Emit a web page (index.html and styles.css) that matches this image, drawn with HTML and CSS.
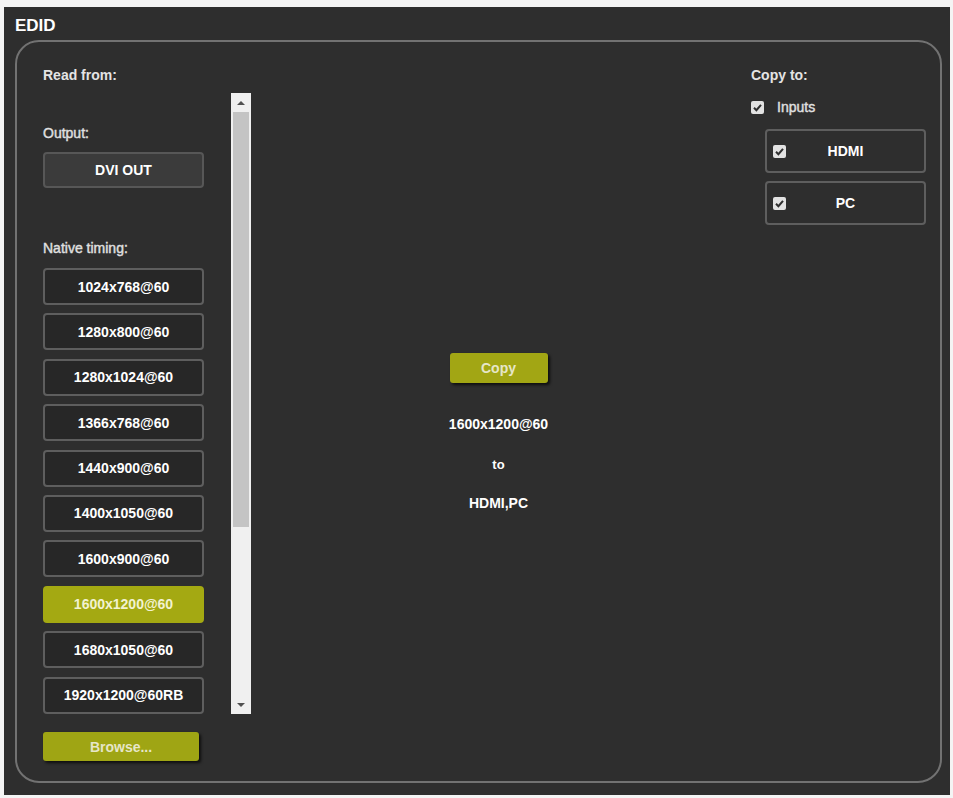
FILE: index.html
```html
<!doctype html>
<html lang="en">
<head>
	<meta charset="UTF-8">
	<title>EDID</title>
	<link rel="stylesheet" href="styles.css">
</head>
<body>
	<div class="panel">
		<div class="panel-title">EDID</div>
		<div class="box">
			<!-- read from -->
			<div class="col-left">
				<div class="head">Read from:</div>
				<div class="scroller">
					<div class="scroll-content">
						<div class="label">Output:</div>
						<div class="btn btn-output">DVI OUT</div>
						<div class="label label-native">Native timing:</div>
						<div class="timings">
							<div class="btn">1024x768@60</div>
							<div class="btn">1280x800@60</div>
							<div class="btn">1280x1024@60</div>
							<div class="btn">1366x768@60</div>
							<div class="btn">1440x900@60</div>
							<div class="btn">1400x1050@60</div>
							<div class="btn">1600x900@60</div>
							<div class="btn btn-selected">1600x1200@60</div>
							<div class="btn">1680x1050@60</div>
							<div class="btn">1920x1200@60RB</div>
						</div>
					</div>
					<div class="scrollbar">
						<div class="sb-arrow"><span class="tri-up"></span></div>
						<div class="sb-track">
							<div class="sb-thumb"></div>
						</div>
						<div class="sb-arrow"><span class="tri-down"></span></div>
					</div>
				</div>
				<div class="btn-olive btn-browse">Browse...</div>
			</div>

			<!-- copy -->
			<div class="col-center">
				<div class="btn-olive btn-copy">Copy</div>
				<div class="info info-res">1600x1200@60</div>
				<div class="info info-to">to</div>
				<div class="info info-dest">HDMI,PC</div>
			</div>

			<!-- copy to -->
			<div class="col-right">
				<div class="head">Copy to:</div>
				<div class="check-row">
					<span class="check"><svg viewBox="0 0 13 13" width="13" height="13"><path d="M3 6.8 L5.4 9.2 L10 3.8" fill="none" stroke="#2e2e2e" stroke-width="2"/></svg></span>
					<span class="check-label">Inputs</span>
				</div>
				<div class="inputs">
					<div class="input-box">
						<span class="check"><svg viewBox="0 0 13 13" width="13" height="13"><path d="M3 6.8 L5.4 9.2 L10 3.8" fill="none" stroke="#2e2e2e" stroke-width="2"/></svg></span>
						<span class="input-name">HDMI</span>
					</div>
					<div class="input-box">
						<span class="check"><svg viewBox="0 0 13 13" width="13" height="13"><path d="M3 6.8 L5.4 9.2 L10 3.8" fill="none" stroke="#2e2e2e" stroke-width="2"/></svg></span>
						<span class="input-name">PC</span>
					</div>
				</div>
			</div>
		</div>
	</div>
</body>
</html>
```

FILE: styles.css
```css
*{
	margin: 0;
	padding: 0;
	box-sizing: border-box;
}
body{
	background: #f4f4f4;
	font-family: "Liberation Sans", Arial, sans-serif;
	font-weight: bold;
	color: #e8e8e8;
}
.panel{
	margin: 7px 3px 3px 4px;
	height: 788px;
	background: #2e2e2e;
	padding: 9px 8px 12px 11px;
	display: flex;
	flex-direction: column;
}
.panel-title{
	font-size: 17px;
	line-height: 20px;
	color: #fff;
	margin-bottom: 4px;
}
.box{
	flex: 1;
	border: 2px solid #727272;
	border-radius: 24px;
	padding: 24px 14px 20px 26px;
	display: flex;
}
.head{
	font-size: 14px;
	line-height: 18px;
	color: #e4e4e4;
}

/* left column */
.col-left{
	width: 208px;
	display: flex;
	flex-direction: column;
}
.scroller{
	margin-top: 9px;
	display: flex;
	height: 621px;
}
.scroll-content{
	width: 188px;
	padding-top: 31px;
}
.label{
	font-size: 14px;
	line-height: 18px;
	color: #e0e0e0;
	font-weight: normal;
	-webkit-text-stroke: 0.4px #e0e0e0;
}
.btn{
	width: 161px;
	height: 37px;
	border: 2px solid #5e5e5e;
	border-radius: 4px;
	background: #272727;
	color: #fff;
	font-size: 14px;
	display: flex;
	align-items: center;
	justify-content: center;
}
.btn-output{
	margin-top: 10px;
	height: 36px;
	background: #3b3b3b;
	border-color: #575757;
}
.label-native{
	margin-top: 51px;
}
.timings{
	margin-top: 11px;
	display: flex;
	flex-direction: column;
	gap: 8.4px;
}
.btn-selected{
	background: #a4a912;
	border-color: #a4a912;
	color: #f2f2d0;
}
.scrollbar{
	width: 20px;
	background: #f0f0f0;
	display: flex;
	flex-direction: column;
}
.sb-arrow{
	height: 19px;
	display: flex;
	align-items: center;
	justify-content: center;
}
.tri-up{
	border-left: 4px solid transparent;
	border-right: 4px solid transparent;
	border-bottom: 4px solid #505050;
}
.tri-down{
	border-left: 4px solid transparent;
	border-right: 4px solid transparent;
	border-top: 4px solid #505050;
}
.sb-track{
	flex: 1;
	padding: 0 2px;
}
.sb-thumb{
	height: 415px;
	background: #c4c4c4;
}
.btn-olive{
	background: #9fa514;
	color: #e6e6c8;
	font-size: 14px;
	display: flex;
	align-items: center;
	justify-content: center;
	border-radius: 3px;
	box-shadow: 2px 2px 3px rgba(0,0,0,.7);
}
.btn-browse{
	margin-top: 18px;
	width: 156px;
	height: 29px;
}

/* center column */
.col-center{
	flex: 1;
	padding-top: 287px;
	padding-right: 5px;
	display: flex;
	flex-direction: column;
	align-items: center;
}
.btn-copy{
	width: 98px;
	height: 30px;
	background: #a2a614;
}
.info{
	font-size: 14px;
	line-height: 18px;
	color: #fff;
}
.info-res{
	margin-top: 32px;
}
.info-to{
	margin-top: 23px;
	font-size: 13px;
}
.info-dest{
	margin-top: 20px;
}

/* right column */
.col-right{
	width: 175px;
}
.check-row{
	margin-top: 14px;
	display: flex;
	align-items: center;
	height: 18px;
}
.check{
	width: 13px;
	height: 13px;
	background: #e2e2e2;
	border-radius: 2px;
	display: block;
}
.check svg{
	display: block;
}
.check-label{
	margin-left: 13px;
	font-size: 14px;
	font-weight: normal;
	-webkit-text-stroke: 0.4px #e0e0e0;
	color: #e0e0e0;
}
.inputs{
	margin-top: 13px;
	margin-left: 14px;
	display: flex;
	flex-direction: column;
	gap: 8px;
}
.input-box{
	height: 44px;
	border: 2px solid #5e5e5e;
	border-radius: 4px;
	display: grid;
	grid-template-columns: 1fr auto 1fr;
	align-items: center;
	padding: 0 6px;
}
.input-name{
	font-size: 14px;
	color: #fff;
}
```
